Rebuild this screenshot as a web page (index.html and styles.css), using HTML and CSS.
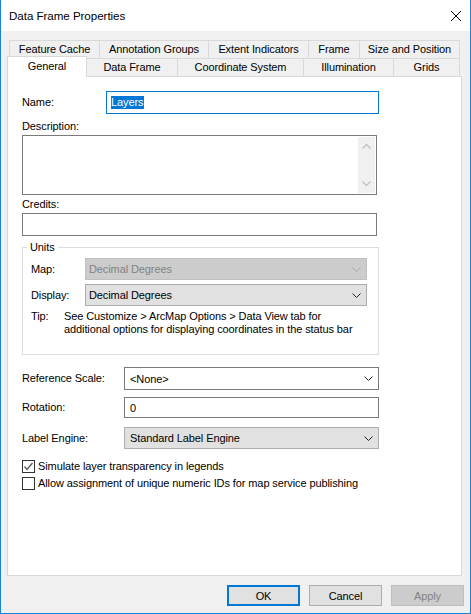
FILE: index.html
```html
<!DOCTYPE html>
<html>
<head>
<meta charset="utf-8">
<title>Data Frame Properties</title>
<link rel="stylesheet" href="styles.css">
</head>
<body>
<div class="window">
  <div class="titlebar">
    <span class="title">Data Frame Properties</span>
    <svg class="close" width="10" height="10" viewBox="0 0 10 10"><path d="M0 0L10 10M10 0L0 10" stroke="#000" stroke-width="1"/></svg>
  </div>

  <div class="tabrow tabrow-back">
    <div class="tab w90">Feature Cache</div>
    <div class="tab w109">Annotation Groups</div>
    <div class="tab w100">Extent Indicators</div>
    <div class="tab w51">Frame</div>
    <div class="tab w101 last">Size and Position</div>
  </div>
  <div class="tabrow tabrow-front">
    <div class="tab tab-selected w79">General</div>
    <div class="tab w91">Data Frame</div>
    <div class="tab w126">Coordinate System</div>
    <div class="tab w90">Illumination</div>
    <div class="tab w67 last">Grids</div>
  </div>

  <div class="panel">
    <div class="row row-name">
      <span class="lbl lbl-name">Name:</span>
      <div class="input input-focus name-input"><span class="sel">Layers</span></div>
    </div>
    <div class="caption cap-desc">Description:</div>
    <div class="textarea">
      <div class="vscroll">
        <svg width="9" height="5" viewBox="0 0 9 5"><path d="M0.5 4.5L4.5 0.5L8.5 4.5" fill="none" stroke="#c2c2c2" stroke-width="1.4"/></svg>
        <svg width="9" height="5" viewBox="0 0 9 5"><path d="M0.5 0.5L4.5 4.5L8.5 0.5" fill="none" stroke="#c2c2c2" stroke-width="1.4"/></svg>
      </div>
    </div>
    <div class="caption cap-credits">Credits:</div>
    <div class="input credits-input"></div>

    <div class="group">
      <span class="group-title">Units</span>
      <div class="grow grow-map">
        <span class="glbl">Map:</span>
        <div class="combo combo-disabled unit-combo">
          <span>Decimal Degrees</span>
          <svg width="9" height="5" viewBox="0 0 9 5"><path d="M0.5 0.5L4.5 4.5L8.5 0.5" fill="none" stroke="#a8a8a8" stroke-width="1"/></svg>
        </div>
      </div>
      <div class="grow grow-display">
        <span class="glbl">Display:</span>
        <div class="combo combo-list unit-combo">
          <span>Decimal Degrees</span>
          <svg width="9" height="5" viewBox="0 0 9 5"><path d="M0.5 0.5L4.5 4.5L8.5 0.5" fill="none" stroke="#222" stroke-width="1"/></svg>
        </div>
      </div>
      <div class="tip">
        <span class="glbl tip-lbl">Tip:</span>
        <span class="tip-text">See Customize &gt; ArcMap Options &gt; Data View tab for<br>additional options for displaying coordinates in the status bar</span>
      </div>
    </div>

    <div class="row row-ref">
      <span class="lbl lbl-wide">Reference Scale:</span>
      <div class="combo combo-edit wide-field h23">
        <span>&lt;None&gt;</span>
        <svg width="9" height="5" viewBox="0 0 9 5"><path d="M0.5 0.5L4.5 4.5L8.5 0.5" fill="none" stroke="#222" stroke-width="1"/></svg>
      </div>
    </div>
    <div class="row row-rot">
      <span class="lbl lbl-wide">Rotation:</span>
      <div class="input wide-field h21 padded">0</div>
    </div>
    <div class="row row-engine">
      <span class="lbl lbl-wide">Label Engine:</span>
      <div class="combo combo-list wide-field h22">
        <span>Standard Label Engine</span>
        <svg width="9" height="5" viewBox="0 0 9 5"><path d="M0.5 0.5L4.5 4.5L8.5 0.5" fill="none" stroke="#222" stroke-width="1"/></svg>
      </div>
    </div>
    <label class="check check-1">
      <span class="box"><svg width="11" height="11" viewBox="0 0 11 11"><path d="M1.5 5.5L4 8.5L9.5 2" fill="none" stroke="#555" stroke-width="1.3"/></svg></span>
      <span>Simulate layer transparency in legends</span>
    </label>
    <label class="check check-2">
      <span class="box"></span>
      <span>Allow assignment of unique numeric IDs for map service publishing</span>
    </label>
  </div>

  <div class="buttons">
    <div class="btn btn-default">OK</div>
    <div class="btn">Cancel</div>
    <div class="btn btn-disabled">Apply</div>
  </div>
</div>
</body>
</html>
```
FILE: styles.css
```css
html, body {
  margin: 0;
  padding: 0;
  background: #ffffff;
}
body {
  font-family: "Liberation Sans", Arial, sans-serif;
  font-size: 11px;
  letter-spacing: -0.1px;
  color: #000;
}
.window {
  width: 471px;
  height: 614px;
  box-sizing: border-box;
  border: 1px solid #1883d7;
  border-top: none;
  background: #f0f0f0;
  display: flex;
  flex-direction: column;
}
.titlebar {
  height: 31px;
  flex: none;
  background: #fff;
  display: flex;
  align-items: center;
  justify-content: space-between;
  padding: 0 9px 0 8px;
  font-size: 11.6px;
  letter-spacing: -0.05px;
}
.close { display: block; }

.tabrow {
  display: flex;
  flex: none;
}
.tabrow-back {
  margin: 9px 0 0 8px;
  height: 18px;
}
.tabrow-front {
  margin: -2px 0 0 6px;
  height: 20px;
  align-items: flex-end;
}
.tab {
  box-sizing: border-box;
  height: 18px;
  border-top: 1px solid #d9d9d9;
  border-left: 1px solid #d9d9d9;
  background: #f0f0f0;
  display: flex;
  align-items: center;
  justify-content: center;
  line-height: 13px;
  white-space: nowrap;
}
.tab.last { border-right: 1px solid #d9d9d9; }
.tab-selected {
  height: 21px;
  margin-bottom: -1px;
  background: #fff;
  border-right: 1px solid #d9d9d9;
  margin-right: -1px;
  position: relative;
  z-index: 2;
  align-items: flex-start;
  padding-top: 3px;
}
.w51 { width: 51px; }
.w67 { width: 67px; }
.w79 { width: 80px; }
.w90 { width: 90px; }
.w91 { width: 91px; }
.w100 { width: 100px; }
.w101 { width: 101px; }
.w109 { width: 109px; }
.w126 { width: 126px; }

.panel {
  flex: none;
  margin-left: 6px;
  width: 455px;
  height: 500px;
  box-sizing: border-box;
  border: 1px solid #d9d9d9;
  background: #fff;
  padding: 14px 0 0 14px;
  display: flex;
  flex-direction: column;
  align-items: flex-start;
  position: relative;
  z-index: 1;
}
.row {
  display: flex;
  align-items: center;
}
.lbl { flex: none; line-height: 13px; }
.lbl-name { width: 84px; }
.lbl-wide { width: 102px; }
.row-name { height: 23px; }
.input {
  box-sizing: border-box;
  border: 1px solid #7a7a7a;
  background: #fff;
}
.input-focus { border-color: #0078d7; }
.name-input {
  width: 273px;
  height: 23px;
  padding-left: 4px;
  display: flex;
  align-items: center;
}
.sel {
  background: #0078d7;
  color: #fff;
  line-height: 13px;
  padding: 0 1px 0 0;
}
.caption { line-height: 13px; }
.cap-desc { margin-top: 6px; }
.textarea {
  margin-top: 2px;
  box-sizing: border-box;
  width: 355px;
  height: 60px;
  border: 1px solid #7a7a7a;
  background: #fff;
  display: flex;
  justify-content: flex-end;
  padding: 1px;
}
.vscroll {
  width: 17px;
  background: #f0f0f0;
  display: flex;
  flex-direction: column;
  align-items: center;
  justify-content: space-between;
  padding: 7px 0 7px;
  box-sizing: border-box;
}
.vscroll svg { display: block; }
.cap-credits { margin-top: 3px; }
.credits-input {
  margin-top: 2px;
  width: 355px;
  height: 23px;
}

.group {
  margin-top: 11px;
  box-sizing: border-box;
  width: 357px;
  height: 108px;
  border: 1px solid #dcdcdc;
  padding: 0 0 0 8px;
  display: flex;
  flex-direction: column;
  align-items: flex-start;
}
.group-title {
  margin: -7px 0 0 -4px;
  padding: 0 3px;
  background: #fff;
  line-height: 13px;
}
.grow {
  display: flex;
  align-items: center;
  height: 22px;
}
.grow-map { margin-top: 4px; }
.grow-display { margin-top: 4px; }
.glbl { width: 54px; flex: none; line-height: 13px; }
.unit-combo { width: 282px; height: 22px; }

.combo {
  box-sizing: border-box;
  display: flex;
  align-items: center;
  justify-content: space-between;
  padding: 0 5px 0 3px;
}
.combo svg { display: block; }
.combo-disabled {
  background: #cccccc;
  border: 1px solid #bfbfbf;
  color: #838383;
}
.combo-list {
  background: #e1e1e1;
  border: 1px solid #adadad;
}
.combo-edit {
  background: #fff;
  border: 1px solid #7a7a7a;
  padding-left: 5px;
}
.tip {
  margin-top: 4px;
  display: flex;
  align-items: flex-start;
  line-height: 13px;
}
.tip-lbl { width: 33px; }
.tip-text { white-space: nowrap; }

.wide-field { width: 255px; }
.h21 { height: 21px; }
.h22 { height: 22px; }
.h23 { height: 23px; }
.padded {
  padding-left: 5px;
  display: flex;
  align-items: center;
}
.combo-list.wide-field { padding-left: 5px; }
.row-ref { margin-top: 12px; }
.row-rot { margin-top: 7px; }
.row-engine { margin-top: 9px; }

.check {
  display: flex;
  align-items: center;
  height: 13px;
  line-height: 13px;
  white-space: nowrap;
}
.check-1 { margin-top: 11px; }
.check-2 { margin-top: 4px; }
.box {
  width: 13px;
  height: 13px;
  box-sizing: border-box;
  border: 1px solid #333;
  background: #fff;
  margin-right: 3px;
  flex: none;
  display: flex;
  align-items: center;
  justify-content: center;
}
.box svg { display: block; }

.buttons {
  margin-top: 9px;
  display: flex;
  justify-content: flex-end;
  gap: 9px;
  padding-right: 6px;
}
.btn {
  box-sizing: border-box;
  width: 73px;
  height: 21px;
  background: #e1e1e1;
  border: 1px solid #adadad;
  display: flex;
  align-items: center;
  justify-content: center;
}
.btn-default { border: 2px solid #0078d7; }
.btn-disabled {
  background: #cccccc;
  border-color: #bfbfbf;
  color: #838383;
}
```
